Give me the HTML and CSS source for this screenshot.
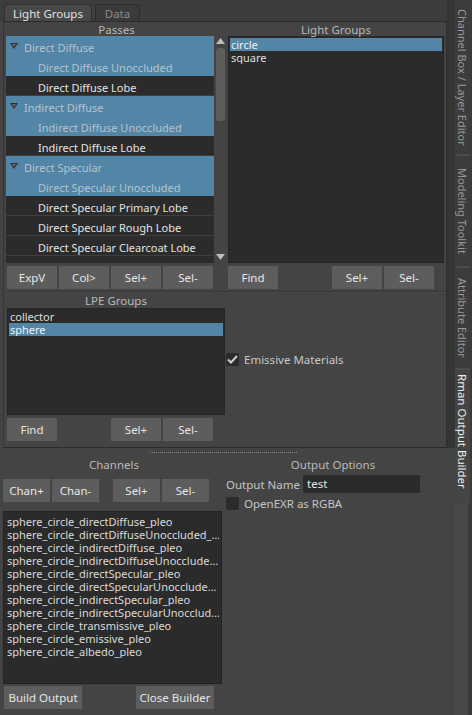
FILE: index.html
```html
<!DOCTYPE html>
<html>
<head>
<meta charset="utf-8">
<link rel="stylesheet" href="styles.css">
</head>
<body>
<div class="app">
  <div class="main">
    <div class="tabbar">
      <div class="tab active">Light Groups</div>
      <div class="tab data">Data</div>
    </div>
    <div class="frame">
      <div class="top">
        <div class="col-left">
          <div class="hdr">Passes</div>
          <div class="tree-wrap">
            <div class="tree">
              <div class="row sel parent"><svg class="tri" width="8" height="6" viewBox="0 0 8 6"><path d="M0 0H8L4 6Z" fill="#2e2e2e"/><path d="M2 1H6L4 4Z" fill="#6a6a6a"/></svg>Direct Diffuse</div>
              <div class="row sel child">Direct Diffuse Unoccluded</div>
              <div class="row child">Direct Diffuse Lobe</div>
              <div class="row sel parent"><svg class="tri" width="8" height="6" viewBox="0 0 8 6"><path d="M0 0H8L4 6Z" fill="#2e2e2e"/><path d="M2 1H6L4 4Z" fill="#6a6a6a"/></svg>Indirect Diffuse</div>
              <div class="row sel child">Indirect Diffuse Unoccluded</div>
              <div class="row child">Indirect Diffuse Lobe</div>
              <div class="row sel parent"><svg class="tri" width="8" height="6" viewBox="0 0 8 6"><path d="M0 0H8L4 6Z" fill="#2e2e2e"/><path d="M2 1H6L4 4Z" fill="#6a6a6a"/></svg>Direct Specular</div>
              <div class="row sel child">Direct Specular Unoccluded</div>
              <div class="row child">Direct Specular Primary Lobe</div>
              <div class="row child">Direct Specular Rough Lobe</div>
              <div class="row child">Direct Specular Clearcoat Lobe</div>
              <div class="row child"></div>
            </div>
            <div class="scroll">
              <svg class="arr" width="9" height="6" viewBox="0 0 9 6"><path d="M4.5 0L9 6H0Z" fill="#bdbdbd"/></svg>
              <div class="track"><div class="thumb"></div></div>
              <svg class="arr" width="9" height="6" viewBox="0 0 9 6"><path d="M0 0H9L4.5 6Z" fill="#bdbdbd"/></svg>
            </div>
          </div>
          <div class="btns">
            <div class="btn">ExpV</div>
            <div class="btn">Col&gt;</div>
            <div class="btn">Sel+</div>
            <div class="btn">Sel-</div>
          </div>
        </div>
        <div class="col-right">
          <div class="hdr">Light Groups</div>
          <div class="list lg">
            <div class="item sel">circle</div>
            <div class="item">square</div>
          </div>
          <div class="btns">
            <div class="btn">Find</div>
            <div class="spacer"></div>
            <div class="btn">Sel+</div>
            <div class="btn">Sel-</div>
          </div>
        </div>
      </div>
      <div class="sep"></div>
      <div class="mid">
        <div class="col-lpe">
          <div class="hdr">LPE Groups</div>
          <div class="list lpe">
            <div class="item">collector</div>
            <div class="item sel">sphere</div>
          </div>
          <div class="btns">
            <div class="btn">Find</div>
            <div class="spacer"></div>
            <div class="btn">Sel+</div>
            <div class="btn">Sel-</div>
          </div>
        </div>
        <div class="emissive">
          <div class="cb"><svg width="11" height="9" viewBox="0 0 11 9"><path d="M1 4.5L4 7.5L10 1" fill="none" stroke="#d0d0d0" stroke-width="2"/></svg></div>
          <span>Emissive Materials</span>
        </div>
      </div>
    </div>
    <div class="dots"></div>
    <div class="bottom">
      <div class="col-chan">
        <div class="hdr h2">Channels</div>
        <div class="btns b2">
          <div class="btn w47">Chan+</div>
          <div class="btn w47">Chan-</div>
          <div class="spacer s2"></div>
          <div class="btn w47">Sel+</div>
          <div class="btn w47">Sel-</div>
        </div>
        <div class="list chan">
          <div class="item">sphere_circle_directDiffuse_pleo</div>
          <div class="item">sphere_circle_directDiffuseUnoccluded_…</div>
          <div class="item">sphere_circle_indirectDiffuse_pleo</div>
          <div class="item">sphere_circle_indirectDiffuseUnocclude…</div>
          <div class="item">sphere_circle_directSpecular_pleo</div>
          <div class="item">sphere_circle_directSpecularUnocclude…</div>
          <div class="item">sphere_circle_indirectSpecular_pleo</div>
          <div class="item">sphere_circle_indirectSpecularUnocclud…</div>
          <div class="item">sphere_circle_transmissive_pleo</div>
          <div class="item">sphere_circle_emissive_pleo</div>
          <div class="item">sphere_circle_albedo_pleo</div>
        </div>
        <div class="btns b3">
          <div class="btn wide">Build Output</div>
          <div class="spacer"></div>
          <div class="btn wide">Close Builder</div>
        </div>
      </div>
      <div class="col-out">
        <div class="hdr h2">Output Options</div>
        <div class="field">
          <span class="lbl">Output Name</span>
          <div class="input">test</div>
        </div>
        <div class="field f2">
          <div class="cb empty"></div>
          <span>OpenEXR as RGBA</span>
        </div>
      </div>
    </div>
  </div>
  <div class="gap"></div>
  <div class="side">
    <div class="vtab t1"><span>Channel Box / Layer Editor</span></div>
    <div class="vtab t2"><span>Modeling Toolkit</span></div>
    <div class="vtab t3"><span>Attribute Editor</span></div>
    <div class="vtab t4 active"><span>Rman Output Builder</span></div>
    <div class="side-rest"></div>
  </div>
</div>
</body>
</html>
```

FILE: styles.css
```css
html, body {
  margin: 0;
  padding: 0;
  background: #444444;
}
body {
  font-family: "Noto Sans", "DejaVu Sans", sans-serif;
  font-size: 11px;
  color: #dcdcdc;
}
.app {
  display: flex;
  width: 472px;
  height: 715px;
  overflow: hidden;
}
.main {
  width: 447px;
  display: flex;
  flex-direction: column;
}
.tabbar {
  height: 21px;
  display: flex;
  align-items: flex-end;
  padding-left: 4px;
  gap: 3px;
  background: #3d3d3d;
}
.tab {
  height: 16px;
  line-height: 17px;
  background: #3a3a3a;
  border: 1px solid #2e2e2e;
  border-bottom: none;
  border-radius: 3px 3px 0 0;
  color: #8c8c8c;
  font-size: 11.5px;
  white-space: nowrap;
  text-align: center;
  box-sizing: content-box;
}
.tab.active {
  background: #484848;
  color: #e2e2e2;
  width: 86px;
}
.tab.data {
  width: 43px;
}
.frame {
  margin-left: 3px;
  height: 427px;
  border: 1px solid #2c2c2c;
  border-left: 1px solid #363636;
  box-sizing: border-box;
  display: flex;
  flex-direction: column;
}
.top {
  display: flex;
  padding-left: 2px;
}
.col-left {
  width: 221px;
}
.col-right {
  width: 216px;
  margin-left: 1px;
}
.hdr {
  height: 14px;
  line-height: 15px;
  text-align: center;
  color: #b9b9b9;
  font-size: 11.5px;
}
.tree-wrap {
  height: 227px;
  display: flex;
}
.tree {
  width: 208px;
  background: #2b2b2b;
  overflow: hidden;
}
.row {
  height: 16px;
  line-height: 19px;
  padding-top: 3px;
  border-bottom: 1px solid #3f3f3f;
  color: #e4e4e4;
  white-space: nowrap;
  display: flex;
  align-items: center;
  box-sizing: content-box;
}
.row.sel {
  background: #5285a6;
  border-bottom-color: #5285a6;
  color: #b5c3cd;
}
.row.parent {
  padding-left: 4px;
}
.row.child {
  padding-left: 32px;
}
.tri {
  margin-right: 6px;
  margin-top: -3px;
}
.scroll {
  width: 13px;
  display: flex;
  flex-direction: column;
  align-items: center;
  padding: 2px 0 3px;
  box-sizing: border-box;
  background: #444;
}
.arr {
  flex: none;
}
.track {
  flex: 1;
  width: 100%;
  padding: 4px 1px;
  box-sizing: border-box;
}
.thumb {
  height: 73px;
  background: #5d5d5d;
  border-radius: 3px;
  margin: 0 1px;
}
.list {
  background: #2b2b2b;
  border: 1px solid #262626;
  box-sizing: border-box;
  padding: 1px;
  overflow: hidden;
}
.list.lg {
  height: 227px;
}
.item {
  height: 13px;
  line-height: 13px;
  padding-left: 1px;
  white-space: nowrap;
  overflow: hidden;
  color: #dedede;
}
.item.sel {
  background: #5285a6;
  color: #eef2f5;
}
.btns {
  display: flex;
  gap: 2px;
  margin-top: 3px;
  height: 23px;
}
.col-left .btns {
  padding-left: 1px;
}
.btn {
  width: 50px;
  height: 23px;
  line-height: 23px;
  background: #5d5d5d;
  text-align: center;
  color: #e6e6e6;
  font-size: 11.5px;
  white-space: nowrap;
}
.spacer {
  width: 50px;
}
.sep {
  margin: 2px 1px 0 3px;
  height: 1px;
  background: #363636;
  border-bottom: 1px solid #4a4a4a;
}
.mid {
  display: flex;
  padding-left: 3px;
}
.col-lpe {
  width: 218px;
}
.list.lpe {
  height: 107px;
  margin-top: 1px;
}
.emissive {
  display: flex;
  align-items: center;
  margin-left: 1px;
  margin-top: 59px;
  height: 14px;
  color: #c8c8c8;
  font-size: 11.5px;
}
.cb {
  width: 13px;
  height: 13px;
  background: #2b2b2b;
  border-radius: 2px;
  display: flex;
  align-items: center;
  justify-content: center;
  margin-right: 5px;
  flex: none;
}
.dots {
  margin: 4px 0 0 150px;
  width: 148px;
  height: 1px;
  background-image: linear-gradient(90deg, #8a8a8a 50%, transparent 50%);
  background-size: 2px 1px;
}
.bottom {
  display: flex;
  flex: 1;
}
.col-chan {
  width: 222px;
  padding-left: 3px;
}
.h2 {
  margin-top: 4px;
  height: 15px;
}
.b2 {
  margin-top: 7px;
  gap: 2px;
}
.w47 {
  width: 47px;
}
.s2 {
  width: 10px;
}
.list.chan {
  margin-top: 9px;
  height: 173px;
  width: 219px;
  padding: 3px 2px;
  border-color: #222;
}
.list.chan .item {
  color: #dadada;
}
.b3 {
  margin-top: 2px;
  padding-left: 1px;
}
.btn.wide {
  width: 78px;
}
.b3 .spacer {
  width: 50px;
}
.col-out {
  margin-left: 1px;
  width: 216px;
}
.col-out .hdr {
  width: 214px;
}
.field {
  display: flex;
  align-items: center;
  height: 18px;
  margin-top: 3px;
  color: #c4c4c4;
  font-size: 11.5px;
}
.lbl {
  white-space: nowrap;
}
.input {
  margin-left: 3px;
  width: 117px;
  height: 18px;
  line-height: 18px;
  background: #2b2b2b;
  border-radius: 2px;
  padding-left: 4px;
  box-sizing: border-box;
  color: #e6e6e6;
}
.f2 {
  margin-top: 4px;
  height: 13px;
}
.gap {
  width: 8px;
  background: linear-gradient(#353535 0, #353535 448px, #444 448px);
}
.side {
  width: 17px;
  display: flex;
  flex-direction: column;
  background: #3a3a3a;
}
.vtab {
  writing-mode: vertical-rl;
  background: #3c3c3c;
  border-bottom: 2px solid #4c4c4c;
  color: #999;
  font-size: 11px;
  padding-top: 9px;
  box-sizing: border-box;
  width: 15px;
  line-height: 15px;
  white-space: nowrap;
}
.t1 { height: 156px; }
.t2 { height: 112px; padding-top: 12px; }
.t3 { height: 102px; padding-top: 10px; }
.t4 { height: 133px; padding-top: 4px; }
.vtab.active {
  background: #444;
  color: #efefef;
  border-bottom: none;
  font-size: 11.5px;
}
.side-rest {
  flex: 1;
  width: 13px;
  background: #484848;
}
```
